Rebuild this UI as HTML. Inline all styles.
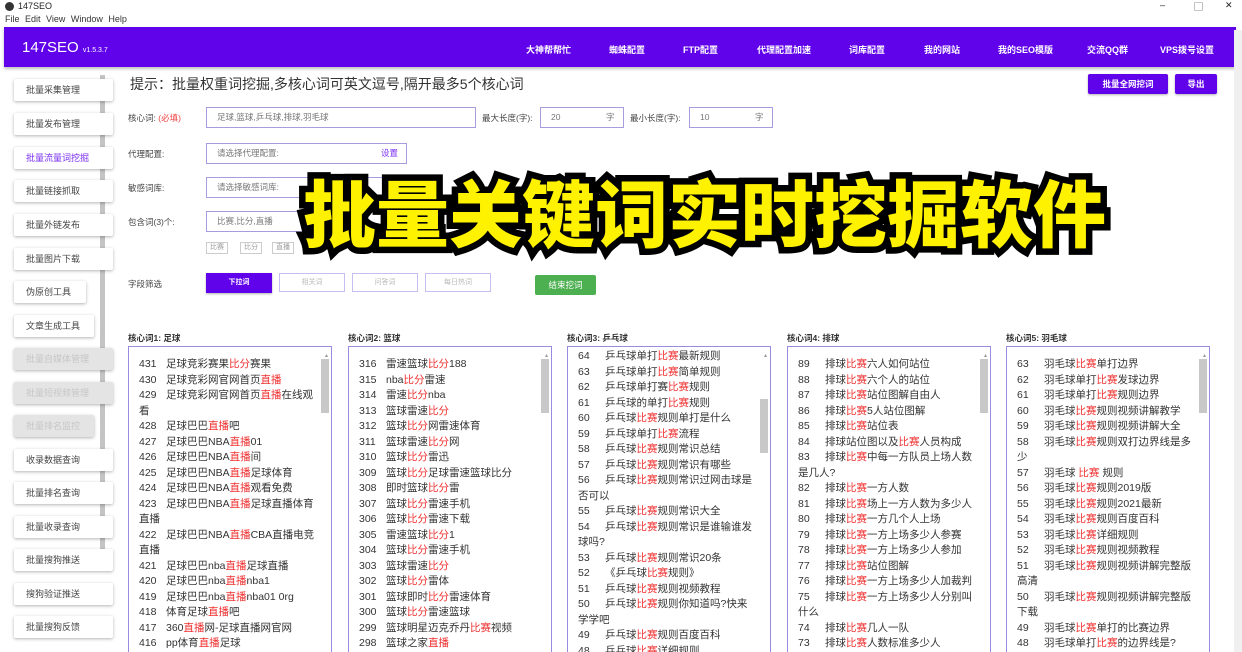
<!DOCTYPE html>
<html><head><meta charset="utf-8"><style>
*{margin:0;padding:0;box-sizing:border-box}
body{width:1242px;height:652px;overflow:hidden;background:#fff;font-family:"Liberation Sans","Noto Sans CJK SC",sans-serif;color:#333;position:relative}
.abs{position:absolute}
.tb{top:0;left:0;width:1242px;height:13px;font-size:9px;color:#222}
.menu{top:14px;left:5px;font-size:9px;color:#333;word-spacing:3px}
.hdr{top:27px;left:4px;width:1232px;height:40px;background:#6002ea;box-shadow:0 2px 3px rgba(0,0,0,.25)}
.logo{left:18px;top:12px;color:#fff;font-size:15px}
.logo small{font-size:7px}
.nav{top:16px;color:#fff;font-size:9px;font-weight:bold}
.sb{left:14px;width:99px;height:22px;background:#fff;box-shadow:0 1px 3px rgba(0,0,0,.3);font-size:9px;color:#444;line-height:22px;padding-left:12px;border-radius:2px}
.sb.dis{background:#e4e4e4;color:#c6c6c6}
.sb.act{color:#7a2ff0}
.lbl{font-size:8.5px;color:#444}
.inp{border:1px solid #a99be0;height:21px;font-size:8.5px;color:#777;line-height:19px;padding-left:10px;background:#fff}
.btn{background:#6002ea;color:#fff;font-size:9px;font-weight:bold;text-align:center;border-radius:2px;box-shadow:0 1px 2px rgba(0,0,0,.3)}
.ob{border:1px solid #c8bdf0;color:#bbb;font-size:7px;text-align:center;height:19px;line-height:17px}
.h{font-size:8.5px;font-weight:bold;color:#333;top:332px}
.box{top:346px;height:306px;width:204px;border:1px solid #9b8be0;border-bottom:none;padding:7px 14px 0 10px;font-size:10.5px;line-height:15.5px;color:#333;overflow:hidden}
.box b{font-weight:normal;display:inline-block;width:27px}
.r{color:#f03030}
.sc{position:absolute;right:2px;top:12px;width:8px;height:54px;background:#c8c8c8}
.sc2{position:absolute;right:3px;top:2px;font-size:6px;color:#999}
.big{left:303px;top:155px;font-family:"Noto Sans CJK SC","WenQuanYi Zen Hei",sans-serif;font-weight:900;font-size:73px;color:#fff200;-webkit-text-stroke:13px #000;paint-order:stroke fill;line-height:110px;white-space:nowrap}
.tag{border:1px solid #ccc;font-size:7px;color:#999;height:12px;line-height:10px;padding:0 3px;top:242px}
</style></head><body>
<div class="abs tb"><span style="position:absolute;left:5px;top:2px;width:9px;height:9px;border-radius:50%;background:#333"></span><span style="position:absolute;left:18px;top:1px">147SEO</span>
<span style="position:absolute;left:1160px;top:0">–</span><span style="position:absolute;left:1194px;top:0">▢</span><span style="position:absolute;left:1225px;top:0">✕</span></div>
<div class="abs menu">File Edit View Window Help</div>
<div class="abs hdr">
<div class="abs logo">147SEO <small>v1.5.3.7</small></div>
<div class="abs nav" style="left:522px">大神帮帮忙</div>
<div class="abs nav" style="left:605px">蜘蛛配置</div>
<div class="abs nav" style="left:679px">FTP配置</div>
<div class="abs nav" style="left:753px">代理配置加速</div>
<div class="abs nav" style="left:845px">词库配置</div>
<div class="abs nav" style="left:920px">我的网站</div>
<div class="abs nav" style="left:994px">我的SEO模版</div>
<div class="abs nav" style="left:1083px">交流QQ群</div>
<div class="abs nav" style="left:1156px">VPS拨号设置</div>
</div>
<div class="abs" style="left:100px;top:75px;width:5px;height:487px;background:#c4c4c4"></div>
<div class="abs" style="left:1234px;top:30px;width:8px;height:622px;background:#f0f0f0"></div>

<div class="abs sb" style="top:79px">批量采集管理</div>
<div class="abs sb" style="top:113px">批量发布管理</div>
<div class="abs sb act" style="top:147px">批量流量词挖掘</div>
<div class="abs sb" style="top:180px">批量链接抓取</div>
<div class="abs sb" style="top:214px">批量外链发布</div>
<div class="abs sb" style="top:248px">批量图片下载</div>
<div class="abs sb" style="top:281px;width:72px">伪原创工具</div>
<div class="abs sb" style="top:315px;width:80px">文章生成工具</div>
<div class="abs sb dis" style="top:348px">批量自媒体管理</div>
<div class="abs sb dis" style="top:382px">批量短视频管理</div>
<div class="abs sb dis" style="top:415px;width:80px">批量排名监控</div>
<div class="abs sb" style="top:449px">收录数据查询</div>
<div class="abs sb" style="top:482px">批量排名查询</div>
<div class="abs sb" style="top:516px">批量收录查询</div>
<div class="abs sb" style="top:549px">批量搜狗推送</div>
<div class="abs sb" style="top:583px">搜狗验证推送</div>
<div class="abs sb" style="top:616px">批量搜狗反馈</div>

<div class="abs" style="left:130px;top:74px;font-size:14px;color:#333">提示：批量权重词挖掘,多核心词可英文逗号,隔开最多5个核心词</div>
<div class="abs btn" style="left:1088px;top:74px;width:80px;height:20px;line-height:20px;font-size:8.5px">批量全网挖词</div>
<div class="abs btn" style="left:1175px;top:74px;width:42px;height:20px;line-height:20px;font-size:8.5px">导出</div>

<div class="abs lbl" style="left:128px;top:112px">核心词: <span style="color:#f04040">(必填)</span></div>
<div class="abs inp" style="left:206px;top:107px;width:270px">足球,篮球,乒乓球,排球,羽毛球</div>
<div class="abs lbl" style="left:482px;top:112px">最大长度(字):</div>
<div class="abs inp" style="left:540px;top:107px;width:84px">20<span style="position:absolute;left:65px">字</span></div>
<div class="abs lbl" style="left:630px;top:112px">最小长度(字):</div>
<div class="abs inp" style="left:689px;top:107px;width:84px">10<span style="position:absolute;left:65px">字</span></div>

<div class="abs lbl" style="left:128px;top:148px">代理配置:</div>
<div class="abs inp" style="left:206px;top:143px;width:201px">请选择代理配置:<span style="position:absolute;left:174px;color:#7a2ff0">设置</span></div>
<div class="abs lbl" style="left:128px;top:182px">敏感词库:</div>
<div class="abs inp" style="left:206px;top:177px;width:201px">请选择敏感词库:</div>
<div class="abs lbl" style="left:128px;top:216px">包含词(3)个:</div>
<div class="abs inp" style="left:206px;top:211px;width:201px">比赛,比分,直播</div>
<div class="abs tag" style="left:206px">比赛</div>
<div class="abs tag" style="left:240px">比分</div>
<div class="abs tag" style="left:272px">直播</div>

<div class="abs lbl" style="left:128px;top:278px">字段筛选</div>
<div class="abs btn" style="left:206px;top:273px;width:66px;height:20px;line-height:20px;font-size:7px;border-radius:0">下拉词</div>
<div class="abs ob" style="left:279px;top:273px;width:66px">相关词</div>
<div class="abs ob" style="left:352px;top:273px;width:66px">问答词</div>
<div class="abs ob" style="left:425px;top:273px;width:66px">每日热词</div>
<div class="abs" style="left:535px;top:275px;width:61px;height:20px;background:#4caf50;color:#fff;font-size:8.5px;text-align:center;line-height:20px;border-radius:2px">结束挖词</div>

<div class="abs h" style="left:128px">核心词1: 足球</div>
<div class="abs h" style="left:348px">核心词2: 篮球</div>
<div class="abs h" style="left:567px">核心词3: 乒乓球</div>
<div class="abs h" style="left:787px">核心词4: 排球</div>
<div class="abs h" style="left:1006px">核心词5: 羽毛球</div>

<div class="abs box" style="left:128px;padding-top:10px"><div class="sc"></div><div class="sc2">▴</div>
<b>431</b>足球竞彩赛果<span class="r">比分</span>赛果<br><b>430</b>足球竞彩网官网首页<span class="r">直播</span><br><b>429</b>足球竞彩网官网首页<span class="r">直播</span>在线观看<br><b>428</b>足球巴巴<span class="r">直播</span>吧<br><b>427</b>足球巴巴NBA<span class="r">直播</span>01<br><b>426</b>足球巴巴NBA<span class="r">直播</span>间<br><b>425</b>足球巴巴NBA<span class="r">直播</span>足球体育<br><b>424</b>足球巴巴NBA<span class="r">直播</span>观看免费<br><b>423</b>足球巴巴NBA<span class="r">直播</span>足球直播体育直播<br><b>422</b>足球巴巴NBA<span class="r">直播</span>CBA直播电竞直播<br><b>421</b>足球巴巴nba<span class="r">直播</span>足球直播<br><b>420</b>足球巴巴nba<span class="r">直播</span>nba1<br><b>419</b>足球巴巴nba<span class="r">直播</span>nba01 0rg<br><b>418</b>体育足球<span class="r">直播</span>吧<br><b>417</b>360<span class="r">直播</span>网-足球直播网官网<br><b>416</b>pp体育<span class="r">直播</span>足球</div>

<div class="abs box" style="left:348px;padding-top:10px"><div class="sc"></div><div class="sc2">▴</div>
<b>316</b>雷速篮球<span class="r">比分</span>188<br><b>315</b>nba<span class="r">比分</span>雷速<br><b>314</b>雷速<span class="r">比分</span>nba<br><b>313</b>篮球雷速<span class="r">比分</span><br><b>312</b>篮球<span class="r">比分</span>网雷速体育<br><b>311</b>篮球雷速<span class="r">比分</span>网<br><b>310</b>篮球<span class="r">比分</span>雷迅<br><b>309</b>篮球<span class="r">比分</span>足球雷速篮球比分<br><b>308</b>即时篮球<span class="r">比分</span>雷<br><b>307</b>篮球<span class="r">比分</span>雷速手机<br><b>306</b>篮球<span class="r">比分</span>雷速下载<br><b>305</b>雷速篮球<span class="r">比分</span>1<br><b>304</b>篮球<span class="r">比分</span>雷速手机<br><b>303</b>篮球雷速<span class="r">比分</span><br><b>302</b>篮球<span class="r">比分</span>雷体<br><b>301</b>篮球即时<span class="r">比分</span>雷速体育<br><b>300</b>篮球<span class="r">比分</span>雷速篮球<br><b>299</b>篮球明星迈克乔丹<span class="r">比赛</span>视频<br><b>298</b>篮球之家<span class="r">直播</span></div>

<div class="abs box" style="left:567px;padding-top:2px"><div class="sc" style="top:52px"></div><div class="sc2">▴</div>
<b>64</b>乒乓球单打<span class="r">比赛</span>最新规则<br><b>63</b>乒乓球单打<span class="r">比赛</span>简单规则<br><b>62</b>乒乓球单打赛<span class="r">比赛</span>规则<br><b>61</b>乒乓球的单打<span class="r">比赛</span>规则<br><b>60</b>乒乓球<span class="r">比赛</span>规则单打是什么<br><b>59</b>乒乓球单打<span class="r">比赛</span>流程<br><b>58</b>乒乓球<span class="r">比赛</span>规则常识总结<br><b>57</b>乒乓球<span class="r">比赛</span>规则常识有哪些<br><b>56</b>乒乓球<span class="r">比赛</span>规则常识过网击球是否可以<br><b>55</b>乒乓球<span class="r">比赛</span>规则常识大全<br><b>54</b>乒乓球<span class="r">比赛</span>规则常识是谁输谁发球吗?<br><b>53</b>乒乓球<span class="r">比赛</span>规则常识20条<br><b>52</b>《乒乓球<span class="r">比赛</span>规则》<br><b>51</b>乒乓球<span class="r">比赛</span>规则视频教程<br><b>50</b>乒乓球<span class="r">比赛</span>规则你知道吗?快来学学吧<br><b>49</b>乒乓球<span class="r">比赛</span>规则百度百科<br><b>48</b>乒乓球<span class="r">比赛</span>详细规则</div>

<div class="abs box" style="left:787px;padding-top:10px"><div class="sc"></div><div class="sc2">▴</div>
<b>89</b>排球<span class="r">比赛</span>六人如何站位<br><b>88</b>排球<span class="r">比赛</span>六个人的站位<br><b>87</b>排球<span class="r">比赛</span>站位图解自由人<br><b>86</b>排球<span class="r">比赛</span>5人站位图解<br><b>85</b>排球<span class="r">比赛</span>站位表<br><b>84</b>排球站位图以及<span class="r">比赛</span>人员构成<br><b>83</b>排球<span class="r">比赛</span>中每一方队员上场人数是几人?<br><b>82</b>排球<span class="r">比赛</span>一方人数<br><b>81</b>排球<span class="r">比赛</span>场上一方人数为多少人<br><b>80</b>排球<span class="r">比赛</span>一方几个人上场<br><b>79</b>排球<span class="r">比赛</span>一方上场多少人参赛<br><b>78</b>排球<span class="r">比赛</span>一方上场多少人参加<br><b>77</b>排球<span class="r">比赛</span>站位图解<br><b>76</b>排球<span class="r">比赛</span>一方上场多少人加裁判<br><b>75</b>排球<span class="r">比赛</span>一方上场多少人分别叫什么<br><b>74</b>排球<span class="r">比赛</span>几人一队<br><b>73</b>排球<span class="r">比赛</span>人数标准多少人</div>

<div class="abs box" style="left:1006px;padding-top:10px"><div class="sc"></div><div class="sc2">▴</div>
<b>63</b>羽毛球<span class="r">比赛</span>单打边界<br><b>62</b>羽毛球单打<span class="r">比赛</span>发球边界<br><b>61</b>羽毛球单打<span class="r">比赛</span>规则边界<br><b>60</b>羽毛球<span class="r">比赛</span>规则视频讲解教学<br><b>59</b>羽毛球<span class="r">比赛</span>规则视频讲解大全<br><b>58</b>羽毛球<span class="r">比赛</span>规则双打边界线是多少<br><b>57</b>羽毛球 <span class="r">比赛</span> 规则<br><b>56</b>羽毛球<span class="r">比赛</span>规则2019版<br><b>55</b>羽毛球<span class="r">比赛</span>规则2021最新<br><b>54</b>羽毛球<span class="r">比赛</span>规则百度百科<br><b>53</b>羽毛球<span class="r">比赛</span>详细规则<br><b>52</b>羽毛球<span class="r">比赛</span>规则视频教程<br><b>51</b>羽毛球<span class="r">比赛</span>规则视频讲解完整版高清<br><b>50</b>羽毛球<span class="r">比赛</span>规则视频讲解完整版下载<br><b>49</b>羽毛球<span class="r">比赛</span>单打的比赛边界<br><b>48</b>羽毛球单打<span class="r">比赛</span>的边界线是?</div>

<div class="abs big">批量关键词实时挖掘软件</div>
</body></html>
